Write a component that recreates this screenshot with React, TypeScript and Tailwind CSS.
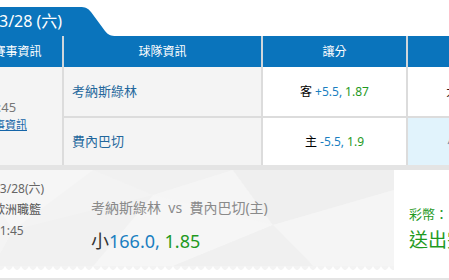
import React from "react";

const F = { fontFamily: '"Noto Sans", "Noto Sans CJK TC", sans-serif' };

function PolyBg() {
  return (
    <svg className="absolute inset-0" width="421" height="100" viewBox="0 0 421 100" preserveAspectRatio="none">
      <rect x="0" y="0" width="421" height="100" fill="#f3f3f3" />
      <g>
        <polygon points="0,0 120,0 40,60" fill="#f6f6f6" />
        <polygon points="120,0 260,0 180,25" fill="#f1f1f1" />
        <polygon points="180,25 260,0 300,55" fill="#f5f5f5" />
        <polygon points="300,55 260,0 421,0 421,20" fill="#efefef" />
        <polygon points="180,25 300,55 200,96 120,96" fill="#f6f6f6" />
        <polygon points="40,60 180,25 120,96 20,96" fill="#f1f1f1" />
        <polygon points="300,55 421,20 421,96 340,96" fill="#f5f5f5" />
        <polygon points="0,60 40,60 20,96 0,96" fill="#f4f4f4" />
        <polygon points="200,96 300,55 340,96" fill="#f0f0f0" />
      </g>
      <path
        d={`M0 96 ${(() => {
          let s = "";
          for (let x = 0; x < 421; x += 8) s += `Q ${x + 4} 104 ${x + 8} 96 `;
          return s;
        })()} L429 100 L0 100 Z`}
        fill="#ffffff"
      />
    </svg>
  );
}

export default function App() {
  return (
    <div className="w-[449px] h-[280px] overflow-hidden bg-white" style={F}>
      <div className="ml-[-27px] w-[620px]">
        {/* Tab */}
        <div className="h-[36px] pt-[7px] flex">
          <div className="h-[29px] w-[107px] bg-[#0a74bc] text-white text-[16px] leading-[29px] pl-[26px] whitespace-nowrap">
            3/28 (六)
          </div>
          <svg width="36" height="29" viewBox="0 0 36 29">
            <path d="M0 0 C5 0 8 1 11 5 L25 24 C28 28 31 29 36 29 L0 29 Z" fill="#0a74bc" />
          </svg>
        </div>

        {/* Header */}
        <div className="flex h-[31px] bg-[#0a74bc] text-white text-[12px]">
          <div className="w-[91px] border-r-2 border-[#cfd6db] flex items-center justify-center">賽事資訊</div>
          <div className="w-[199px] border-r-2 border-[#cfd6db] flex items-center justify-center">球隊資訊</div>
          <div className="w-[145px] border-r-2 border-[#cfd6db] flex items-center justify-center">讓分</div>
          <div className="w-[146px] flex items-center justify-center">大小</div>
        </div>

        {/* Body */}
        <div className="grid grid-cols-[91px_199px_145px_146px] grid-rows-[51px_47px] text-[12px]">
          <div className="row-span-2 bg-[#f4f4f4] border-r-2 border-[#dcdcdc] flex flex-col justify-center pl-[10px] leading-[18px]">
            <div className="text-[#777777] text-[13px]">21:45</div>
            <div className="text-[#1565a8] underline text-[11px]">賽事資訊</div>
          </div>
          <div className="bg-[#f4f4f4] border-r-2 border-b-2 border-[#dcdcdc] flex items-center pl-[8px] text-[13px] text-[#23679c]">
            考納斯綠林
          </div>
          <div className="bg-white border-r-2 border-b-2 border-[#dcdcdc] flex items-center justify-center whitespace-nowrap">
            <span className="text-black">客</span>
            <span className="ml-[3px] text-[#1a7fc1]">+5.5,</span>
            <span className="ml-[3px] text-[#1f9a1f]">1.87</span>
          </div>
          <div className="bg-white border-b-2 border-[#dcdcdc] flex items-center justify-center pl-[6px] whitespace-nowrap">
            <span className="text-[#331111]">大</span>
            <span className="ml-[3px] text-[#1a7fc1]">166.0,</span>
            <span className="ml-[3px] text-[#1f9a1f]">1.95</span>
          </div>
          <div className="bg-[#f4f4f4] border-r-2 border-[#dcdcdc] flex items-center pl-[8px] text-[13px] text-[#23679c]">
            費內巴切
          </div>
          <div className="bg-white border-r-2 border-[#dcdcdc] flex items-center justify-center whitespace-nowrap">
            <span className="text-black">主</span>
            <span className="ml-[3px] text-[#1a7fc1]">-5.5,</span>
            <span className="ml-[3px] text-[#1f9a1f]">1.9</span>
          </div>
          <div className="bg-[#e1f3fc] flex items-center justify-center pl-[8px] whitespace-nowrap">
            <span className="text-[#6a7f99]">小</span>
            <span className="ml-[3px] text-[#1a7fc1]">166.0,</span>
            <span className="ml-[3px] text-[#1f9a1f]">1.85</span>
          </div>
        </div>

        {/* Card */}
        <div className="h-[115px] border-t-[5px] border-b-2 border-[#e4e4e4] flex bg-white">
          <div className="relative w-[421px] h-[100px]">
            <PolyBg />
            <div className="relative flex">
              <div className="w-[118px] pt-[8px] pl-[20px] leading-[21px] text-[12px] text-[#666666]">
                <div>03/28(六)</div>
                <div className="text-[#555555]">歐洲職籃</div>
                <div>21:45</div>
              </div>
              <div className="pt-[28px]">
                <div className="leading-[20px] text-[14px] text-[#8a8a8a] whitespace-nowrap">
                  考納斯綠林 &nbsp;vs&nbsp; 費內巴切(主)
                </div>
                <div className="mt-[10px] leading-[26px] text-[18px] whitespace-nowrap">
                  <span className="text-[#333]">小</span>
                  <span className="text-[#1a7fc1]">166.0, </span>
                  <span className="text-[#1f9a1f]">1.85</span>
                </div>
              </div>
            </div>
          </div>
          <div className="pl-[15px] pt-[35px] text-[#1f9a1f] whitespace-nowrap">
            <div className="leading-[18px] text-[13px]">彩幣：100</div>
            <div className="mt-[4px] leading-[26px] text-[19px]">送出完成</div>
          </div>
        </div>
      </div>
    </div>
  );
}
